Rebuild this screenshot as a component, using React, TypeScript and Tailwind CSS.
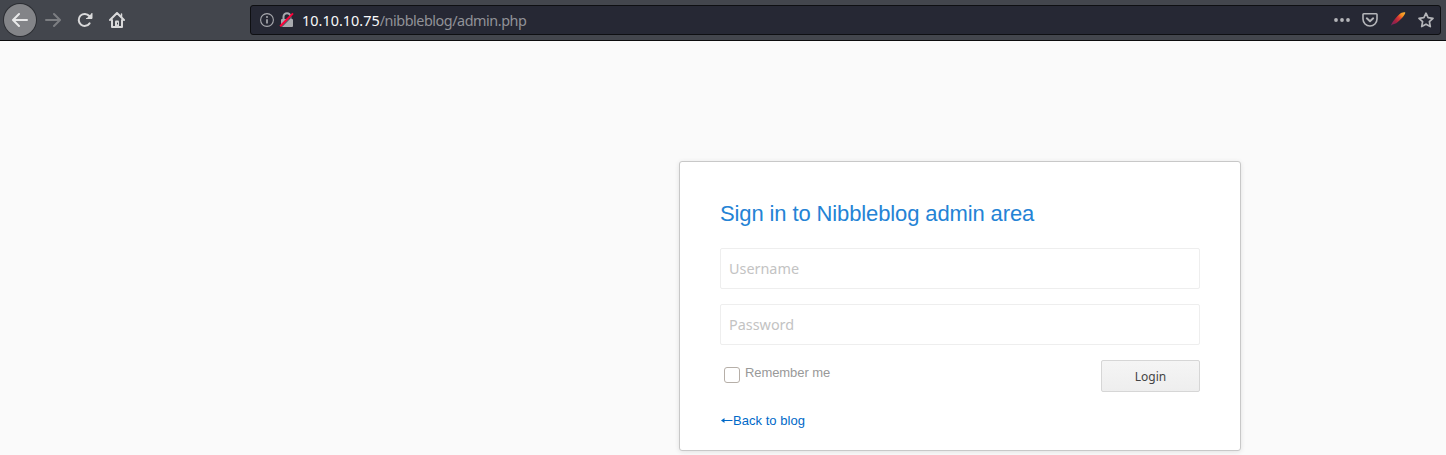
import React from "react";

function BackIcon({ className }: { className: string }) {
  return (
    <svg viewBox="0 0 16 16" className={className} fill="none" stroke="currentColor" strokeWidth="2" strokeLinecap="round" strokeLinejoin="round">
      <path d="M15 8H1.5M7 2L1 8l6 6" />
    </svg>
  );
}

function ReloadIcon() {
  return (
    <svg viewBox="0 0 16 16" className="h-4 w-4" fill="none" stroke="#d9d9da" strokeWidth="2" strokeLinecap="round">
      <path d="M12.6 11.4A6 6 0 1 1 12.3 4" />
      <path d="M15 1v6H9z" fill="#d9d9da" stroke="none" />
      <path d="M15 1.5V6.5H9.5" strokeWidth="1" />
    </svg>
  );
}

function HomeIcon() {
  return (
    <svg viewBox="0 0 16 16" className="h-4 w-4" fill="none" stroke="#d9d9da" strokeWidth="2" strokeLinecap="round" strokeLinejoin="round">
      <path d="M1 8l7-7 7 7M3 8v7h10V8" />
      <path d="M6 15V9.5a1 1 0 0 1 1-1h2a1 1 0 0 1 1 1V15z" fill="#d9d9da" stroke="none" />
      <path d="M8.5 11v1" stroke="#43464d" strokeWidth="1" />
      <path d="M12.5 2v3" strokeWidth="1.5" />
    </svg>
  );
}

function Toolbar() {
  return (
    <header className="flex h-[41px] items-start border-b border-[#0c0c0d] bg-[#43464d]">
      <nav className="flex h-10 w-[250px] shrink-0 items-center pl-1">
        <div className="flex h-8 w-8 items-center justify-center rounded-full bg-[#838488] text-[#e8e8e9] shadow-[0_0_0_1px_#2c2e33]">
          <BackIcon className="h-4 w-4" />
        </div>
        <div className="flex h-8 w-[34px] items-center justify-center text-[#7c7e82]">
          <BackIcon className="h-4 w-4 -scale-x-100" />
        </div>
        <div className="flex h-8 w-[30px] items-center justify-center">
          <ReloadIcon />
        </div>
        <div className="flex h-8 w-[34px] items-center justify-center">
          <HomeIcon />
        </div>
      </nav>
      <div className="mt-[5px] mr-[5px] flex h-[30px] flex-1 items-center rounded-[3px] border border-[#0e0f12] bg-[#262834] pr-[6px] pl-[9px]">
        <svg viewBox="0 0 14 14" className="h-[14px] w-[14px] shrink-0" fill="none" stroke="#a8a9ae">
          <circle cx="7" cy="7" r="6.4" strokeWidth="1.1" />
          <path d="M7 6.2v4.3" strokeWidth="1.7" />
          <circle cx="7" cy="4" r="1" fill="#a8a9ae" stroke="none" />
        </svg>
        <svg viewBox="0 0 16 16" className="ml-[5px] h-4 w-4 shrink-0">
          <path d="M4.5 8V4.8a3.5 3.5 0 0 1 7 0V8" fill="none" stroke="#a8a9ae" strokeWidth="2" />
          <rect x="2" y="7" width="12" height="8" rx="1" fill="#a8a9ae" />
          <path d="M1.8 15.6L14.8 2.6" stroke="#262834" strokeWidth="1" />
          <path d="M1.2 14.2L14 1.4" stroke="#ff0039" strokeWidth="2" />
        </svg>
        <div className="mt-[2px] ml-[7px] flex-1 font-['Noto_Sans',sans-serif] text-[14.4px] leading-7 tracking-[-0.46px] text-[#919298]">
          <span className="tracking-[0.02px] text-[#f9f9fa]">10.10.10.75</span>/nibbleblog/admin.php
        </div>
        <svg viewBox="0 0 16 16" className="h-4 w-4" fill="#b4b5b9">
          <circle cx="2" cy="8" r="1.9" />
          <circle cx="8" cy="8" r="1.9" />
          <circle cx="14" cy="8" r="1.9" />
        </svg>
        <svg viewBox="0 0 16 16" className="ml-3 h-4 w-4" fill="none" stroke="#b4b5b9" strokeLinecap="round" strokeLinejoin="round">
          <path d="M1.8 1.8h12.4a.8.8 0 0 1 .8.8V7A7 7 0 0 1 1 7V2.6a.8.8 0 0 1 .8-.8z" strokeWidth="1.6" />
          <path d="M4.8 6.3L8 9.3l3.2-3" strokeWidth="1.9" />
        </svg>
        <svg viewBox="0 0 16 16" className="ml-3 h-4 w-4">
          <defs>
            <linearGradient id="feather" x1="1" y1="14" x2="15" y2="1" gradientUnits="userSpaceOnUse">
              <stop offset="0" stopColor="#722463" />
              <stop offset=".35" stopColor="#a52242" />
              <stop offset=".6" stopColor="#dd3b32" />
              <stop offset=".78" stopColor="#f58a1f" />
              <stop offset="1" stopColor="#f9b233" />
            </linearGradient>
          </defs>
          <path d="M.8 13.8C1.8 10.5 7 3.8 11 1 13 .1 15 0 15.3.6 15.6 2.2 10.5 8.6 6.2 11.3 4.2 12.1 2.3 12 .8 13.8z" fill="url(#feather)" />
        </svg>
        <svg viewBox="0 0 16 16" className="ml-3 h-4 w-4" fill="none" stroke="#b4b5b9" strokeWidth="1.7" strokeLinejoin="round">
          <path d="M8 1.2l2.1 4.5 4.9.6-3.6 3.4.9 4.9L8 12.2l-4.3 2.4.9-4.9L1 6.3l4.9-.6z" />
        </svg>
      </div>
    </header>
  );
}

const fieldClass =
  "block h-[41px] w-full rounded-[2px] border border-[#eeeeee] bg-white px-2 font-['Noto_Sans',sans-serif] text-[14.4px] text-[#555555] outline-none placeholder:text-[#c3c3c3] placeholder:opacity-100";

export default function App() {
  return (
    <div className="h-[455px] overflow-hidden bg-[#fafafa] font-['Liberation_Sans',Arial,sans-serif]">
      <Toolbar />
      <main className="pt-[120px] pl-[679px]">
        <form
          onSubmit={(event) => event.preventDefault()}
          className="h-[290px] w-[562px] rounded-[3px] border border-[#c8c8c8] bg-white px-10 pt-[38px] shadow-[0_1px_5px_rgba(0,0,0,0.1)]"
        >
          <h1 className="h-[48px] text-[22px] leading-[28px] tracking-[-0.12px] whitespace-nowrap text-[#2483d5]">Sign in to Nibbleblog admin area</h1>
          <input type="text" placeholder="Username" className={fieldClass} />
          <input type="password" placeholder="Password" className={`mt-[15px] ${fieldClass}`} />
          <div className="mt-[15px] flex items-start justify-between">
            <label className="flex items-start pl-1 text-[13px] leading-[15px] text-[#999999]">
              <input type="checkbox" className="mt-[7px] h-4 w-4 appearance-none rounded-[3px] border border-[#b6afa8] bg-white" />
              <span className="mt-[5px] ml-[5px] tracking-[-0.08px]">Remember me</span>
            </label>
            <button className="h-8 w-[99px] rounded-[2px] border border-[#d6d6d6] bg-linear-to-b from-[#f5f5f5] to-[#eeeeee] pt-[2px] font-['Noto_Sans',sans-serif] text-[12px] text-[#444444]">
              Login
            </button>
          </div>
          <a href="#" className="mt-[21px] flex h-[15px] items-center text-[13px] leading-[15px] tracking-[0.04px] text-[#0069c8]">
            <svg viewBox="0 0 13 10" className="h-[10px] w-[13px]" fill="none" stroke="currentColor">
              <path d="M2 4.5h10.5" />
              <path d="M4.5 2L1 4.5 4.5 7z" fill="currentColor" stroke="none" />
            </svg>
            Back to blog
          </a>
        </form>
      </main>
    </div>
  );
}
